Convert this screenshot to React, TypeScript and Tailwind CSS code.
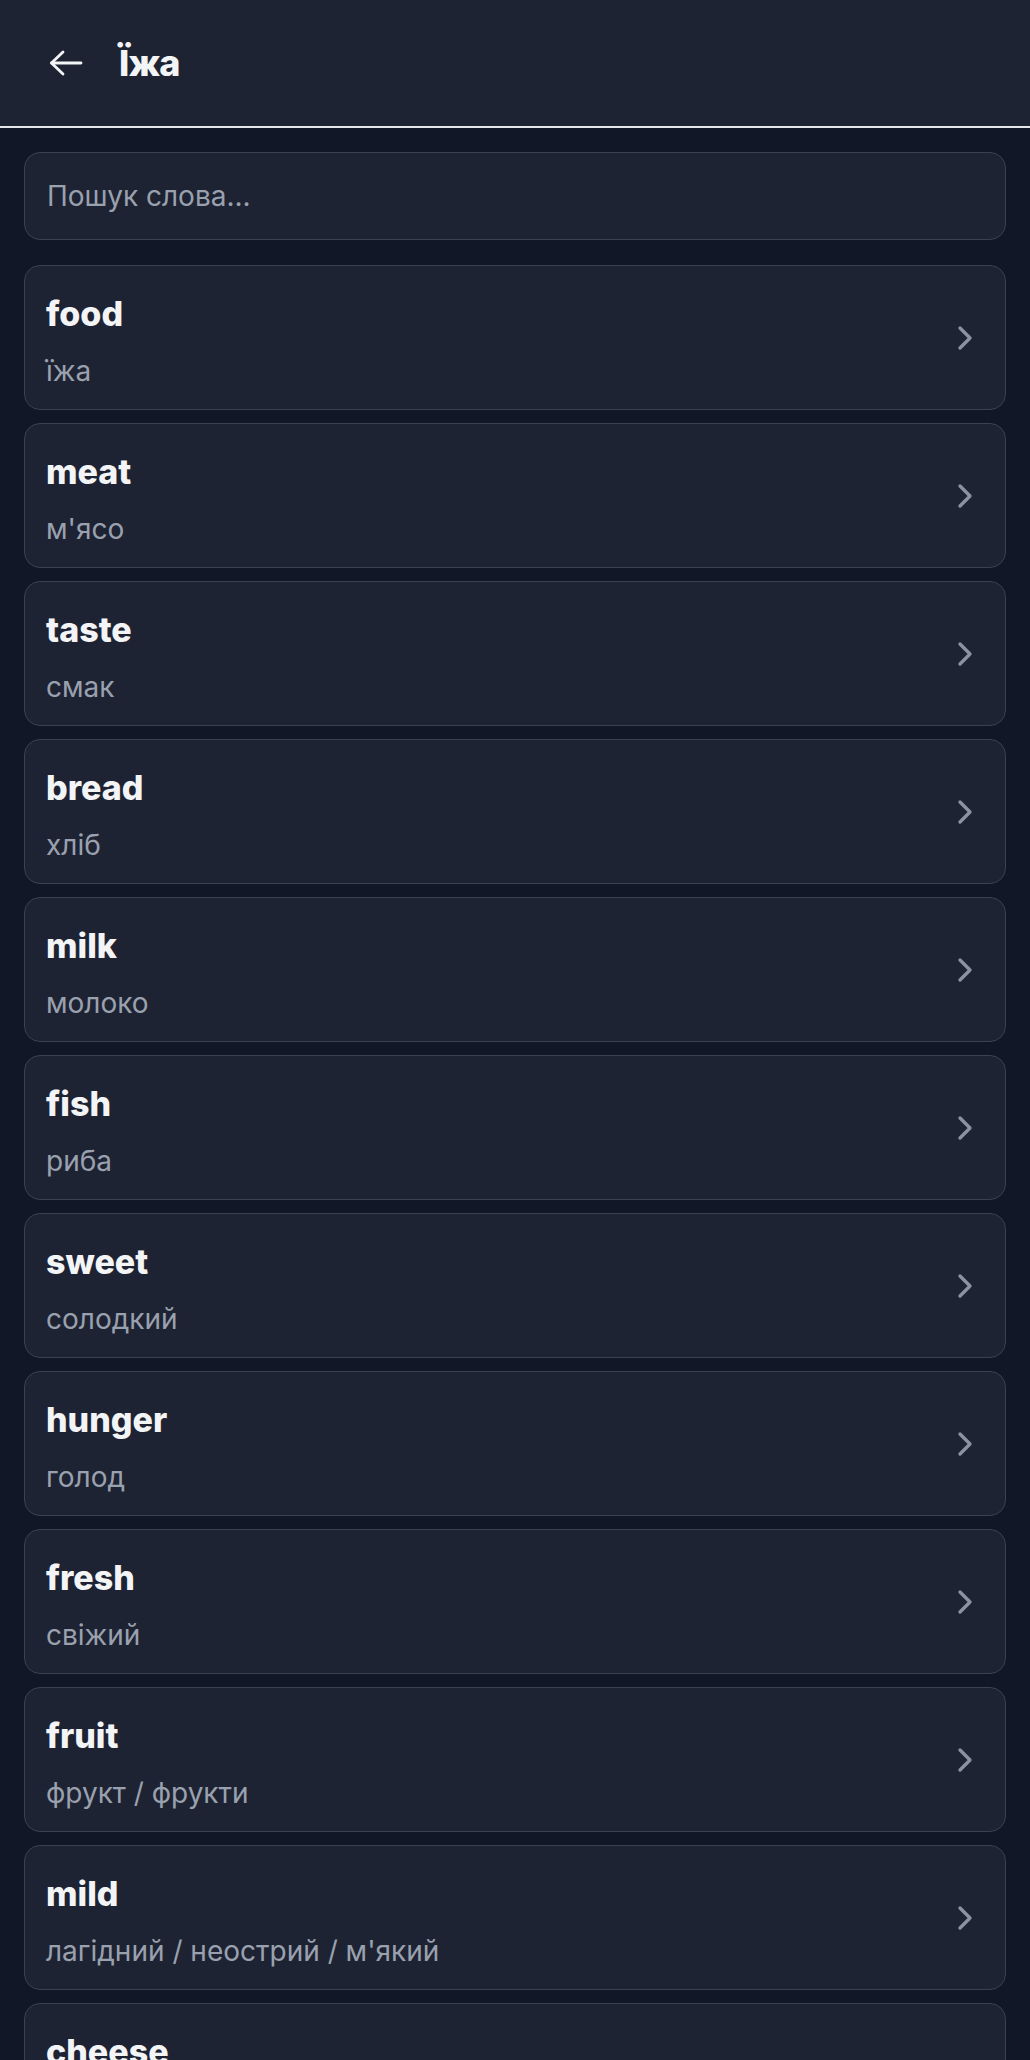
import React from "react";
import { ChevronRight } from "lucide-react";

const words = [
  { en: "food", ua: "їжа" },
  { en: "meat", ua: "м'ясо" },
  { en: "taste", ua: "смак" },
  { en: "bread", ua: "хліб" },
  { en: "milk", ua: "молоко" },
  { en: "fish", ua: "риба" },
  { en: "sweet", ua: "солодкий" },
  { en: "hunger", ua: "голод" },
  { en: "fresh", ua: "свіжий" },
  { en: "fruit", ua: "фрукт / фрукти" },
  { en: "mild", ua: "лагідний / неострий / м'який" },
  { en: "cheese", ua: "сир" },
];

function BackArrow() {
  return (
    <svg width="34" height="26" viewBox="0 0 34 26" fill="none" stroke="currentColor" strokeWidth="2.8" strokeLinecap="round" strokeLinejoin="round">
      <path d="M14 2 L2.5 13 L14 24" />
      <path d="M2.5 13 H32" />
    </svg>
  );
}

export default function App() {
  return (
    <div className="min-h-screen bg-[#111727] font-['Inter',_'Noto_Sans',_sans-serif]">
      <header className="h-[128px] bg-[#1e2333] border-b-2 border-[#e5e7eb] flex items-center pl-[49px] gap-[36px]">
        <button className="text-[#f3f4f6]">
          <BackArrow />
        </button>
        <h1 className="text-[36px] font-extrabold tracking-tight text-[#f3f4f6] leading-none">Їжа</h1>
      </header>

      <main className="px-6 pt-6 flex flex-col">
        <input
          placeholder="Пошук слова..."
          className="h-[88px] w-full rounded-2xl border border-[#394152] bg-[#1e2333] px-[22px] text-[28px] text-[#f3f4f6] placeholder:text-[#9aa1ae] outline-none"
        />

        <ul className="mt-[25px] flex flex-col gap-[13px]">
          {words.map((w) => (
            <li
              key={w.en}
              className="h-[145px] rounded-2xl border border-[#394152] bg-[#1e2333] flex items-center justify-between pl-[21px] pr-5"
            >
              <div className="flex flex-col self-start pt-6">
                <span className="text-[34px] leading-[48px] font-extrabold text-[#f3f4f6]">{w.en}</span>
                <span className="mt-[13px] text-[28px] leading-[40px] text-[#9aa1ae]">{w.ua}</span>
              </div>
              <ChevronRight size={40} strokeWidth={2} className="text-[#8b93a3]" />
            </li>
          ))}
        </ul>
      </main>
    </div>
  );
}
